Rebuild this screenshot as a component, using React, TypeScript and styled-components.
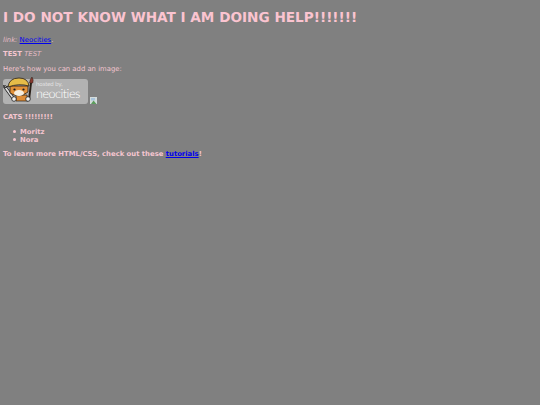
import React from 'react';
import styled, { createGlobalStyle } from 'styled-components';

const GlobalStyle = createGlobalStyle`
  html, body {
    margin: 0;
    min-height: 100%;
    background: #808080;
  }
`;

const Page = styled.div`
  padding: 10px 3px 0;
  font-family: "DejaVu Sans", Verdana, sans-serif;
  font-size: 6.85px;
  line-height: 8px;
  color: #f5c6d0;
  text-rendering: geometricPrecision;
`;

const Heading = styled.h1`
  margin: 0 0 10px;
  font-size: 13.62px;
  line-height: 16px;
  font-weight: bold;
  color: #fbc4d0;
`;

const Para = styled.p`
  margin: 0 0 6.3px;
`;

const Dim = styled.em`
  font-style: italic;
  color: #e6bcc6;
`;

const Link = styled.a`
  color: #0000ee;
  text-decoration: underline;
`;

const BadgeRow = styled.div`
  display: flex;
  align-items: flex-end;
  gap: 2px;
  margin: 0 0 9px;
`;

const Badge = styled.div`
  display: flex;
  align-items: center;
  width: 85px;
  height: 25px;
  background: #b2b2b2;
  border-radius: 3px;
  color: #fff;
`;

const LogoMark = styled.svg`
  flex: none;
  width: 33px;
  height: 26px;
  margin-top: -2px;
`;

const BadgeText = styled.div`
  font-family: Lato, "Open Sans", sans-serif;
  font-weight: 300;
`;

const Hosted = styled.div`
  font-size: 6px;
  line-height: 6px;
`;

const Neo = styled.div`
  font-size: 12.6px;
  line-height: 12px;
  letter-spacing: -0.5px;
`;

const List = styled.ul`
  margin: 0 0 6px;
  padding: 0 0 0 10px;
  font-weight: bold;
  list-style: none;
`;

const Item = styled.li`
  display: flex;
  align-items: center;
  gap: 4px;

  &::before {
    content: "";
    width: 3px;
    height: 3px;
    border-radius: 50%;
    background: currentColor;
  }
`;

const Strong = styled.p`
  margin: 0 0 7px;
  font-weight: bold;
`;

const BrokenIcon = styled.svg`
  flex: none;
  width: 7px;
  height: 7px;
`;

const Cat = () => (
  <LogoMark viewBox="0 0 33 26">
    <path d="M2 10 L10 21" stroke="#222" strokeWidth="3.2" strokeLinecap="round" />
    <path d="M2 10 L10 21" stroke="#ddd" strokeWidth="1.8" strokeLinecap="round" />
    <path d="M0.5 8 L2 11 L5 9" fill="none" stroke="#222" strokeWidth="1" />
    <path d="M26 23 L28 6" stroke="#2a2018" strokeWidth="2" />
    <path d="M26.5 6 Q27 2 29 0 Q31 3 29.8 6 Z" fill="#8c3a30" stroke="#2a2018" strokeWidth="0.5" />
    <path d="M13 18 L24 18 L25 24 L13 24 Z" fill="#dd8c36" stroke="#2a2018" strokeWidth="0.7" />
    <path d="M7 9 L7 16 Q16 22 25 15 L25 9 Z" fill="#e2913a" stroke="#2a2018" strokeWidth="0.8" />
    <ellipse cx="16" cy="16" rx="5" ry="3" fill="#f4ede0" />
    <path d="M5 10 Q6 1 16 1 Q25 1 26 9 Q16 6 5 10 Z" fill="#e6bc48" stroke="#2a2018" strokeWidth="0.8" />
    <circle cx="11.5" cy="12.5" r="1.1" fill="#1a1a1a" />
    <circle cx="20.5" cy="12.5" r="1.1" fill="#1a1a1a" />
    <circle cx="11" cy="22" r="2.3" fill="#f2f2f2" stroke="#222" strokeWidth="0.8" />
    <circle cx="25" cy="22" r="2.3" fill="#f2f2f2" stroke="#222" strokeWidth="0.8" />
  </LogoMark>
);

const Broken = () => (
  <BrokenIcon viewBox="0 0 7 7">
    <rect width="7" height="7" fill="#d4dcdc" />
    <rect x="1" y="1" width="4" height="2.5" fill="#a8c4dc" />
    <path d="M1 7 L3.5 3.5 L6.5 7 Z" fill="#5c9c5c" />
  </BrokenIcon>
);

export default function App() {
  return (
    <>
      <GlobalStyle />
      <Page>
        <Heading>I DO NOT KNOW WHAT I AM DOING HELP!!!!!!!</Heading>
        <Para><Dim>link:</Dim> <Link href="#">Neocities</Link>.</Para>
        <Para><b>TEST</b> <Dim>TEST</Dim></Para>
        <Para>Here's how you can add an image:</Para>
        <BadgeRow>
          <Badge>
            <Cat />
            <BadgeText>
              <Hosted>hosted by,</Hosted>
              <Neo>neocities</Neo>
            </BadgeText>
          </Badge>
          <Broken />
        </BadgeRow>
        <Strong>CATS !!!!!!!!!</Strong>
        <List>
          <Item>Moritz</Item>
          <Item>Nora</Item>
        </List>
        <Strong>To learn more HTML/CSS, check out these <Link href="#">tutorials</Link>!</Strong>
      </Page>
    </>
  );
}
